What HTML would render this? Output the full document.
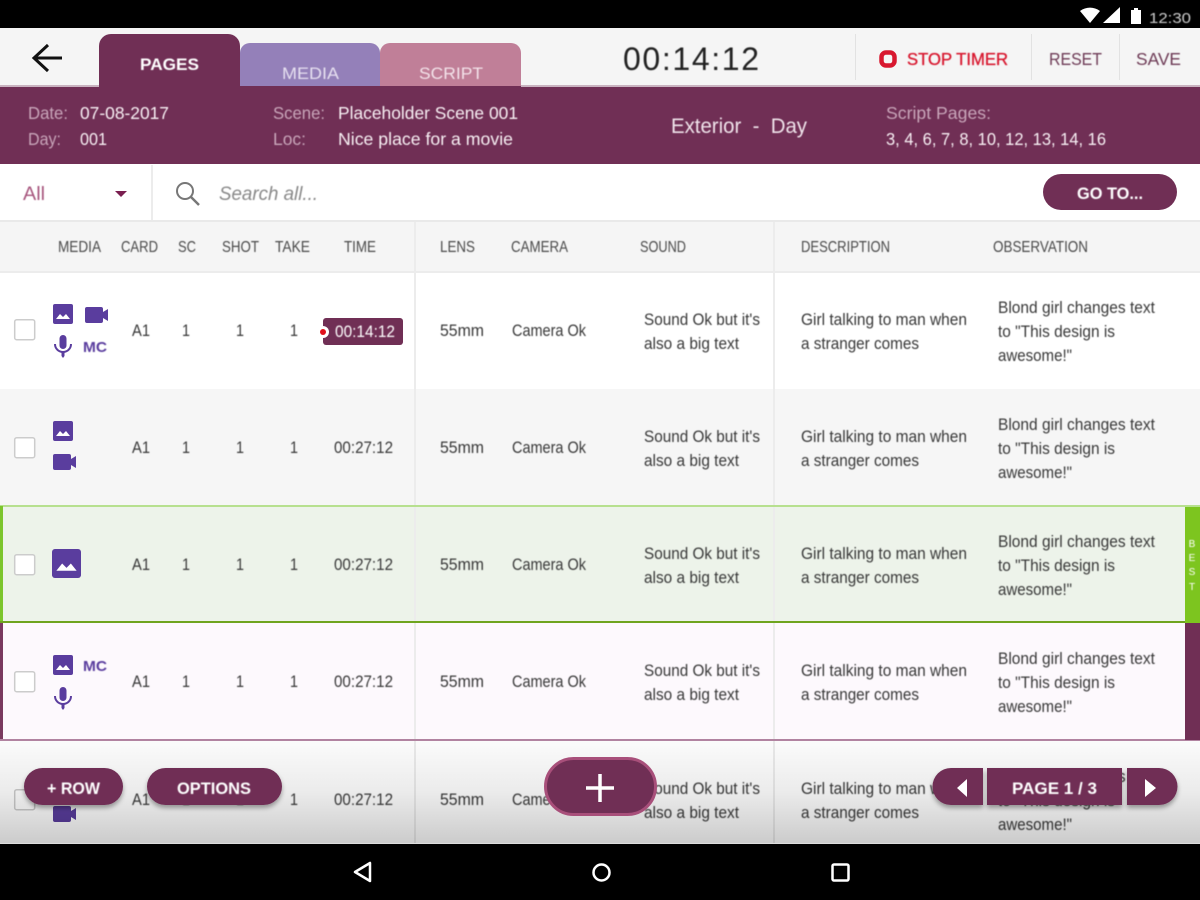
<!DOCTYPE html>
<html><head><meta charset="utf-8"><title>Pages</title>
<style>
html,body{margin:0;padding:0;width:1200px;height:900px;overflow:hidden;background:#000}
svg{display:block;font-family:"Liberation Sans",sans-serif}
text{fill:#383838;font-size:16.500px}
.h{font-size:15.500px;fill:#4a4a4a}
.w{fill:#fff;font-weight:bold;font-size:17px}
.l{fill:#c9a6ba;font-size:17.500px}
.v{fill:#f8f0f4;font-size:17.500px}
.m{fill:#5a3d9e;font-weight:bold;font-size:15px}
.soft{filter:blur(.4px)}
</style></head><body>
<svg width="1200" height="900" viewBox="0 0 1200 900" xmlns="http://www.w3.org/2000/svg">
<defs>
<g id="img"><rect width="20" height="20" rx="2" fill="#5a3d9e"/><path d="M3 15l4-5 3 3 3-3 4 5z" fill="#fff"/></g>
<g id="vid"><path d="M0 2a2 2 0 0 1 2-2h14a2 2 0 0 1 2 2v3l5-3v12l-5-3v3a2 2 0 0 1-2 2H2a2 2 0 0 1-2-2z" fill="#5a3d9e"/></g>
<g id="mic"><rect x="-3.500" y="0" width="7" height="14" rx="3.500" fill="#5a3d9e"/><path d="M-8 9c0 5 4 8 8 8s8-3 8-8" fill="none" stroke="#5a3d9e" stroke-width="2"/><path d="M-1.500 16h3v5l-1.500 2-1.500-2z" fill="#5a3d9e"/></g>
<linearGradient id="fade" x1="0" y1="0" x2="0" y2="1"><stop offset="0" stop-color="#fbfbfb"/><stop offset=".5" stop-color="#ebebeb"/><stop offset="1" stop-color="#cbcbcb"/></linearGradient>
<filter id="sh" x="-20%" y="-30%" width="140%" height="170%"><feDropShadow dx="0" dy="3" stdDeviation="2.500" flood-color="#000" flood-opacity=".35"/></filter>
</defs>

<rect width="1200" height="900" fill="#000"/>
<rect y="28" width="1200" height="58" fill="#f5f5f5"/>
<rect y="86" width="1200" height="78" fill="#702f55"/>
<rect y="164" width="1200" height="56" fill="#fff"/>
<rect y="220" width="1200" height="52" fill="#f5f5f5"/>
<rect y="220" width="1200" height="2" fill="#e9e9e9"/>
<rect y="271" width="1200" height="2" fill="#ececec"/>
<rect y="273" width="1200" height="116" fill="#fff"/>
<rect y="389" width="1200" height="117" fill="#f6f6f6"/>
<rect y="506" width="1200" height="117" fill="#edf3ea"/>
<rect y="623" width="1200" height="117" fill="#fdf9fd"/>
<rect y="740" width="1200" height="104" fill="#fff"/>

<rect x="414" y="222" width="2" height="622" fill="#ececec"/>
<rect x="773" y="222" width="2" height="622" fill="#ececec"/>
<rect x="151" y="165" width="2" height="55" fill="#ececec"/>

<!-- highlighted rows -->
<rect y="505" width="1200" height="2" fill="#b7e08f"/>
<rect y="506" width="3" height="117" fill="#7cc52c"/>
<rect y="621" width="1200" height="2" fill="#6fa51f"/>
<rect x="1185" y="507" width="15" height="116" fill="#7dc51f"/>
<rect y="623" width="3" height="117" fill="#7a3a5f"/>
<rect y="739" width="1200" height="2" fill="#b183a0"/>
<rect x="1185" y="623" width="15" height="117" fill="#702f55"/>

<!-- tabs -->
<path d="M99 86V46a12 12 0 0 1 12-12h117a12 12 0 0 1 12 12v40z" fill="#702f55"/>
<path d="M240 86V53a10 10 0 0 1 10-10h120a10 10 0 0 1 10 10v33z" fill="#9480b9"/>
<path d="M380 86V53a10 10 0 0 1 10-10h121a10 10 0 0 1 10 10v33z" fill="#c07f98"/>
<rect y="85" width="99" height="2" fill="#c9b3c0"/>
<rect x="521" y="85" width="679" height="2" fill="#c9b3c0"/>

<!-- back arrow -->
<path d="M62 58H35M48 45L34 58l14 13" fill="none" stroke="#111" stroke-width="3"/>

<!-- top dividers -->
<rect x="855" y="34" width="1" height="46" fill="#e2e2e2"/>
<rect x="1031" y="34" width="1" height="46" fill="#e2e2e2"/>
<rect x="1119" y="34" width="1" height="46" fill="#e2e2e2"/>
<rect x="881.500" y="52.500" width="13" height="13" rx="4.500" fill="none" stroke="#d8182f" stroke-width="4.500"/>

<!-- search -->
<path d="M115 191h12l-6 6z" fill="#7a1f50"/>
<circle cx="185" cy="191" r="8" fill="none" stroke="#777" stroke-width="2"/>
<path d="M191 197l8 8" stroke="#777" stroke-width="2.500"/>
<rect x="1043" y="174" width="134" height="36" rx="18" fill="#702f55"/>

<!-- row 1-5 checkboxes -->
<g fill="#fff" stroke="#ccc" stroke-width="1.500">
<rect x="14.700" y="319.700" width="20" height="20" rx="2"/>
<rect x="14.700" y="437.700" width="20" height="20" rx="2"/>
<rect x="14.700" y="554.700" width="20" height="20" rx="2"/>
<rect x="14.700" y="671.700" width="20" height="20" rx="2"/>
<rect x="14.700" y="789.700" width="20" height="20" rx="2"/>
</g>

<!-- media icons -->
<use href="#img" x="53" y="304"/><use href="#vid" x="85" y="307"/><use href="#mic" x="63" y="335"/>
<use href="#img" x="53" y="421"/><use href="#vid" x="53" y="454"/>
<use href="#img" transform="translate(52 549) scale(1.450)"/>
<use href="#img" x="53" y="655"/><use href="#mic" x="63" y="687"/>
<use href="#vid" x="53" y="806"/>

<!-- time pill -->
<path d="M326 318h74a3 3 0 0 1 3 3v21a3 3 0 0 1-3 3h-74a3 3 0 0 1-3-3v-21a3 3 0 0 1 3-3z" fill="#702f55"/>
<circle cx="323" cy="332" r="6" fill="#fff"/><circle cx="323" cy="332" r="3" fill="#e0101c"/>

<g class="soft">
<text x="1149" y="23" textLength="42" lengthAdjust="spacingAndGlyphs" style="fill:#ccc;font-size:15px">12:30</text>
<text x="140" y="70" textLength="59" lengthAdjust="spacingAndGlyphs" class="w">PAGES</text>
<text x="282" y="79" textLength="57" lengthAdjust="spacingAndGlyphs" style="fill:#e6dff0;font-size:17px">MEDIA</text>
<text x="419" y="79" textLength="64" lengthAdjust="spacingAndGlyphs" style="fill:#f3e3ea;font-size:17px">SCRIPT</text>
<text x="623" y="70" textLength="136" lengthAdjust="spacing" style="fill:#222;font-size:32px">00:14:12</text>
<text x="907" y="65" textLength="101" lengthAdjust="spacingAndGlyphs" style="fill:#d8182f;font-size:17.500px;stroke:#d8182f;stroke-width:.35px">STOP TIMER</text>
<text x="1049" y="65" textLength="53" lengthAdjust="spacingAndGlyphs" style="fill:#6d3a55;font-size:17.500px">RESET</text>
<text x="1136" y="65" textLength="45" lengthAdjust="spacingAndGlyphs" style="fill:#6d3a55;font-size:17.500px">SAVE</text>

<text x="28" y="119" textLength="40" lengthAdjust="spacingAndGlyphs" class="l">Date:</text>
<text x="80" y="119" textLength="89" lengthAdjust="spacingAndGlyphs" class="v">07-08-2017</text>
<text x="28" y="145" textLength="33" lengthAdjust="spacingAndGlyphs" class="l">Day:</text>
<text x="80" y="145" textLength="27" lengthAdjust="spacingAndGlyphs" class="v">001</text>
<text x="273" y="119" textLength="52" lengthAdjust="spacingAndGlyphs" class="l">Scene:</text>
<text x="338" y="119" textLength="180" lengthAdjust="spacingAndGlyphs" class="v">Placeholder Scene 001</text>
<text x="273" y="145" textLength="33" lengthAdjust="spacingAndGlyphs" class="l">Loc:</text>
<text x="338" y="145" textLength="175" lengthAdjust="spacingAndGlyphs" class="v">Nice place for a movie</text>
<text x="671" y="133" textLength="136" lengthAdjust="spacingAndGlyphs" style="fill:#f0e4eb;font-size:21px" xml:space="preserve">Exterior  -  Day</text>
<text x="886" y="119" textLength="105" lengthAdjust="spacingAndGlyphs" class="l">Script Pages:</text>
<text x="886" y="145" textLength="220" lengthAdjust="spacingAndGlyphs" class="v">3, 4, 6, 7, 8, 10, 12, 13, 14, 16</text>

<text x="23" y="200" textLength="22" lengthAdjust="spacingAndGlyphs" style="fill:#a6547c;font-size:19px">All</text>
<text x="219" y="200" textLength="99" lengthAdjust="spacingAndGlyphs" style="fill:#888;font-size:19px;font-style:italic">Search all...</text>
<text x="1077" y="199" textLength="66" lengthAdjust="spacingAndGlyphs" class="w">GO TO...</text>

<text x="58" y="252" textLength="43" lengthAdjust="spacingAndGlyphs" class="h">MEDIA</text>
<text x="121" y="252" textLength="37" lengthAdjust="spacingAndGlyphs" class="h">CARD</text>
<text x="178" y="252" textLength="18" lengthAdjust="spacingAndGlyphs" class="h">SC</text>
<text x="222" y="252" textLength="37" lengthAdjust="spacingAndGlyphs" class="h">SHOT</text>
<text x="275" y="252" textLength="35" lengthAdjust="spacingAndGlyphs" class="h">TAKE</text>
<text x="344" y="252" textLength="32" lengthAdjust="spacingAndGlyphs" class="h">TIME</text>
<text x="440" y="252" textLength="35" lengthAdjust="spacingAndGlyphs" class="h">LENS</text>
<text x="511" y="252" textLength="57" lengthAdjust="spacingAndGlyphs" class="h">CAMERA</text>
<text x="640" y="252" textLength="46" lengthAdjust="spacingAndGlyphs" class="h">SOUND</text>
<text x="801" y="252" textLength="89" lengthAdjust="spacingAndGlyphs" class="h">DESCRIPTION</text>
<text x="993" y="252" textLength="95" lengthAdjust="spacingAndGlyphs" class="h">OBSERVATION</text>

<!-- row 1 -->
<text x="83" y="352" textLength="24" lengthAdjust="spacingAndGlyphs" class="m">MC</text>
<text x="132" y="336" textLength="18" lengthAdjust="spacingAndGlyphs">A1</text>
<text x="182" y="336" textLength="8" lengthAdjust="spacingAndGlyphs">1</text><text x="236" y="336" textLength="8" lengthAdjust="spacingAndGlyphs">1</text><text x="290" y="336" textLength="8" lengthAdjust="spacingAndGlyphs">1</text>
<text x="335" y="337" textLength="60" lengthAdjust="spacingAndGlyphs" style="fill:#fff">00:14:12</text>
<text x="440" y="336" textLength="44" lengthAdjust="spacingAndGlyphs">55mm</text>
<text x="512" y="336" textLength="74" lengthAdjust="spacingAndGlyphs">Camera Ok</text>
<text x="644" y="325" textLength="116" lengthAdjust="spacingAndGlyphs">Sound Ok but it's</text>
<text x="644" y="349" textLength="95" lengthAdjust="spacingAndGlyphs">also a big text</text>
<text x="801" y="325" textLength="166" lengthAdjust="spacingAndGlyphs">Girl talking to man when</text>
<text x="801" y="349" textLength="118" lengthAdjust="spacingAndGlyphs">a stranger comes</text>
<text x="998" y="313" textLength="157" lengthAdjust="spacingAndGlyphs">Blond girl changes text</text>
<text x="998" y="337" textLength="117" lengthAdjust="spacingAndGlyphs">to "This design is</text>
<text x="998" y="361" textLength="74" lengthAdjust="spacingAndGlyphs">awesome!"</text>

<!-- row 2 -->
<text x="132" y="453" textLength="18" lengthAdjust="spacingAndGlyphs">A1</text>
<text x="182" y="453" textLength="8" lengthAdjust="spacingAndGlyphs">1</text><text x="236" y="453" textLength="8" lengthAdjust="spacingAndGlyphs">1</text><text x="290" y="453" textLength="8" lengthAdjust="spacingAndGlyphs">1</text>
<text x="334" y="453" textLength="59" lengthAdjust="spacingAndGlyphs">00:27:12</text>
<text x="440" y="453" textLength="44" lengthAdjust="spacingAndGlyphs">55mm</text>
<text x="512" y="453" textLength="74" lengthAdjust="spacingAndGlyphs">Camera Ok</text>
<text x="644" y="442" textLength="116" lengthAdjust="spacingAndGlyphs">Sound Ok but it's</text>
<text x="644" y="466" textLength="95" lengthAdjust="spacingAndGlyphs">also a big text</text>
<text x="801" y="442" textLength="166" lengthAdjust="spacingAndGlyphs">Girl talking to man when</text>
<text x="801" y="466" textLength="118" lengthAdjust="spacingAndGlyphs">a stranger comes</text>
<text x="998" y="430" textLength="157" lengthAdjust="spacingAndGlyphs">Blond girl changes text</text>
<text x="998" y="454" textLength="117" lengthAdjust="spacingAndGlyphs">to "This design is</text>
<text x="998" y="478" textLength="74" lengthAdjust="spacingAndGlyphs">awesome!"</text>

<!-- row 3 -->
<text x="132" y="570" textLength="18" lengthAdjust="spacingAndGlyphs">A1</text>
<text x="182" y="570" textLength="8" lengthAdjust="spacingAndGlyphs">1</text><text x="236" y="570" textLength="8" lengthAdjust="spacingAndGlyphs">1</text><text x="290" y="570" textLength="8" lengthAdjust="spacingAndGlyphs">1</text>
<text x="334" y="570" textLength="59" lengthAdjust="spacingAndGlyphs">00:27:12</text>
<text x="440" y="570" textLength="44" lengthAdjust="spacingAndGlyphs">55mm</text>
<text x="512" y="570" textLength="74" lengthAdjust="spacingAndGlyphs">Camera Ok</text>
<text x="644" y="559" textLength="116" lengthAdjust="spacingAndGlyphs">Sound Ok but it's</text>
<text x="644" y="583" textLength="95" lengthAdjust="spacingAndGlyphs">also a big text</text>
<text x="801" y="559" textLength="166" lengthAdjust="spacingAndGlyphs">Girl talking to man when</text>
<text x="801" y="583" textLength="118" lengthAdjust="spacingAndGlyphs">a stranger comes</text>
<text x="998" y="547" textLength="157" lengthAdjust="spacingAndGlyphs">Blond girl changes text</text>
<text x="998" y="571" textLength="117" lengthAdjust="spacingAndGlyphs">to "This design is</text>
<text x="998" y="595" textLength="74" lengthAdjust="spacingAndGlyphs">awesome!"</text>
<text x="1192" y="547" text-anchor="middle" style="fill:#fff;font-size:10px">B</text>
<text x="1192" y="561" text-anchor="middle" style="fill:#fff;font-size:10px">E</text>
<text x="1192" y="575" text-anchor="middle" style="fill:#fff;font-size:10px">S</text>
<text x="1192" y="590" text-anchor="middle" style="fill:#fff;font-size:10px">T</text>

<!-- row 4 -->
<text x="83" y="671" textLength="24" lengthAdjust="spacingAndGlyphs" class="m">MC</text>
<text x="132" y="687" textLength="18" lengthAdjust="spacingAndGlyphs">A1</text>
<text x="182" y="687" textLength="8" lengthAdjust="spacingAndGlyphs">1</text><text x="236" y="687" textLength="8" lengthAdjust="spacingAndGlyphs">1</text><text x="290" y="687" textLength="8" lengthAdjust="spacingAndGlyphs">1</text>
<text x="334" y="687" textLength="59" lengthAdjust="spacingAndGlyphs">00:27:12</text>
<text x="440" y="687" textLength="44" lengthAdjust="spacingAndGlyphs">55mm</text>
<text x="512" y="687" textLength="74" lengthAdjust="spacingAndGlyphs">Camera Ok</text>
<text x="644" y="676" textLength="116" lengthAdjust="spacingAndGlyphs">Sound Ok but it's</text>
<text x="644" y="700" textLength="95" lengthAdjust="spacingAndGlyphs">also a big text</text>
<text x="801" y="676" textLength="166" lengthAdjust="spacingAndGlyphs">Girl talking to man when</text>
<text x="801" y="700" textLength="118" lengthAdjust="spacingAndGlyphs">a stranger comes</text>
<text x="998" y="664" textLength="157" lengthAdjust="spacingAndGlyphs">Blond girl changes text</text>
<text x="998" y="688" textLength="117" lengthAdjust="spacingAndGlyphs">to "This design is</text>
<text x="998" y="712" textLength="74" lengthAdjust="spacingAndGlyphs">awesome!"</text>

<!-- row 5 -->
<text x="132" y="805" textLength="18" lengthAdjust="spacingAndGlyphs">A1</text>
<text x="182" y="805" textLength="8" lengthAdjust="spacingAndGlyphs">1</text><text x="236" y="805" textLength="8" lengthAdjust="spacingAndGlyphs">1</text><text x="290" y="805" textLength="8" lengthAdjust="spacingAndGlyphs">1</text>
<text x="334" y="805" textLength="59" lengthAdjust="spacingAndGlyphs">00:27:12</text>
<text x="440" y="805" textLength="44" lengthAdjust="spacingAndGlyphs">55mm</text>
<text x="512" y="805" textLength="74" lengthAdjust="spacingAndGlyphs">Camera Ok</text>
<text x="644" y="794" textLength="116" lengthAdjust="spacingAndGlyphs">Sound Ok but it's</text>
<text x="644" y="818" textLength="95" lengthAdjust="spacingAndGlyphs">also a big text</text>
<text x="801" y="794" textLength="166" lengthAdjust="spacingAndGlyphs">Girl talking to man when</text>
<text x="801" y="818" textLength="118" lengthAdjust="spacingAndGlyphs">a stranger comes</text>
<text x="998" y="782" textLength="157" lengthAdjust="spacingAndGlyphs">Blond girl changes text</text>
<text x="998" y="806" textLength="117" lengthAdjust="spacingAndGlyphs">to "This design is</text>
<text x="998" y="830" textLength="74" lengthAdjust="spacingAndGlyphs">awesome!"</text>
</g>

<!-- bottom fade: darkens the background while the row content stays dark -->
<rect y="741" width="1200" height="103" fill="url(#fade)" style="mix-blend-mode:multiply"/>
<rect y="843" width="1200" height="1" fill="#ddd"/>

<!-- bottom buttons -->
<g filter="url(#sh)" fill="#702f55">
<rect x="24" y="768" width="99" height="37" rx="18.500"/>
<rect x="147" y="768" width="135" height="37" rx="18.500"/>
<path d="M983 768h-32a18.500 18.500 0 0 0 0 37h32z"/>
<rect x="987" y="768" width="135" height="37"/>
<path d="M1127 768h32a18.500 18.500 0 0 1 0 37h-32z"/>
</g>
<rect x="545.500" y="758.500" width="110" height="56" rx="28" fill="#702f55" stroke="#a84f7a" stroke-width="3"/>
<path d="M600 774v28M586 788h28" stroke="#fff" stroke-width="3.500"/>
<path d="M967 779v18l-10-9z" fill="#fff"/>
<path d="M1145 779v18l11-9z" fill="#fff"/>
<g class="soft">
<text x="47" y="794" textLength="53" lengthAdjust="spacingAndGlyphs" class="w">+ ROW</text>
<text x="177" y="794" textLength="74" lengthAdjust="spacingAndGlyphs" class="w">OPTIONS</text>
<text x="1012" y="794" textLength="85" lengthAdjust="spacingAndGlyphs" class="w">PAGE 1 / 3</text>
</g>

<!-- status icons -->
<path d="M1080 11c6-4.500 14-4.500 20 0l-10 12z" fill="#fff"/>
<path d="M1103 23l17-16v16z" fill="#fff"/>
<path d="M1131 10h3V8h4v2h3v14h-10z" fill="#fff"/>

<!-- nav bar -->
<path d="M370 863v18l-15-9z" fill="none" stroke="#fff" stroke-width="2.500" stroke-linejoin="round"/>
<circle cx="601.500" cy="872.500" r="8" fill="none" stroke="#fff" stroke-width="2.500"/>
<rect x="832.500" y="864.500" width="16" height="16" rx="1.500" fill="none" stroke="#fff" stroke-width="2.500"/>
</svg>
</body></html>
